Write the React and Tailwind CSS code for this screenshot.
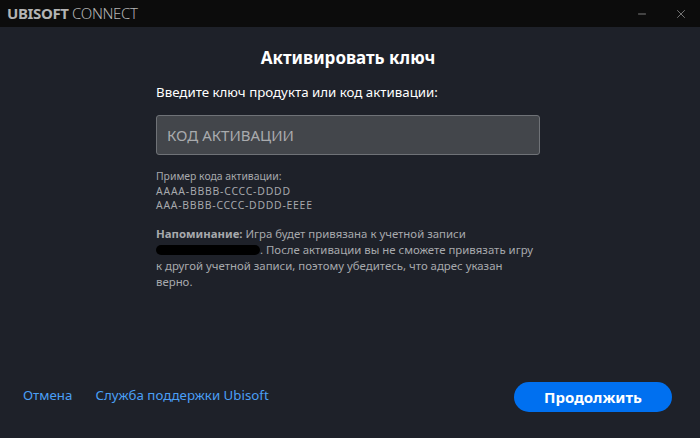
import { X, Minus } from 'lucide-react';

export default function App() {
    return (
        <div
            className="w-[700px] h-[438px] flex flex-col bg-[#1e2129] overflow-hidden"
            style={{ fontFamily: '"Noto Sans", "Open Sans", sans-serif' }}
        >
            {/* title bar */}
            <div className="h-[27px] bg-[#0c0c0c] flex items-center justify-between pl-[7px] pr-[12px]">
                <div className="text-[15px] text-[#b4b4b4] tracking-tight leading-none">
                    <span className="font-bold">UBISOFT</span>{' '}
                    <span className="font-light">CONNECT</span>
                </div>
                <div className="flex items-center gap-[26px] text-[#a0a0a0]">
                    <Minus className="w-[12px] h-[12px]" strokeWidth={1.5} />
                    <X className="w-[14px] h-[14px]" strokeWidth={1.2} />
                </div>
            </div>

            {/* content */}
            <div className="flex-1 flex flex-col items-center">
                <div className="w-[384px] ml-[-4px]">
                    <h1 className="mt-[20px] text-center text-[17px] font-bold text-white leading-[22px]">
                        Активировать ключ
                    </h1>
                    <p className="mt-[13px] text-[13.3px] text-white leading-[20px]">
                        Введите ключ продукта или код активации:
                    </p>
                    <div className="mt-[13px] h-[40px] rounded-[3px] bg-[#43464b] border border-[#6f7277] flex items-center px-[10px]">
                        <span className="text-[15px] text-[#a9abae]">КОД АКТИВАЦИИ</span>
                    </div>
                    <div className="mt-[14px] text-[10.4px] leading-[14.5px] text-[#a7a9ad]">
                        <p>Пример кода активации:</p>
                        <p className="tracking-[0.8px]">AAAA-BBBB-CCCC-DDDD</p>
                        <p className="tracking-[0.75px]">AAA-BBBB-CCCC-DDDD-EEEE</p>
                    </div>
                    <p className="mt-[13px] text-[11.4px] leading-[16px] text-[#a7a9ad]">
                        <span className="font-bold">Напоминание:</span> Игра будет привязана к учетной записи{' '}
                        <span className="inline-block w-[104px] h-[10px] bg-black rounded-full align-middle"></span>. После активации вы не сможете привязать игру к другой учетной записи, поэтому убедитесь, что адрес указан верно.
                    </p>
                </div>
            </div>

            {/* footer */}
            <div className="h-[56px] flex items-start justify-between pl-[23px] pr-[28px]">
                <div className="flex items-center gap-[23px] mt-[4px] text-[13.3px] text-[#4a9ff5]">
                    <span>Отмена</span>
                    <span>Служба поддержки Ubisoft</span>
                </div>
                <button className="w-[158px] h-[30px] rounded-full bg-[#0070f0] text-white text-[15px] font-bold">
                    Продолжить
                </button>
            </div>
        </div>
    );
}
